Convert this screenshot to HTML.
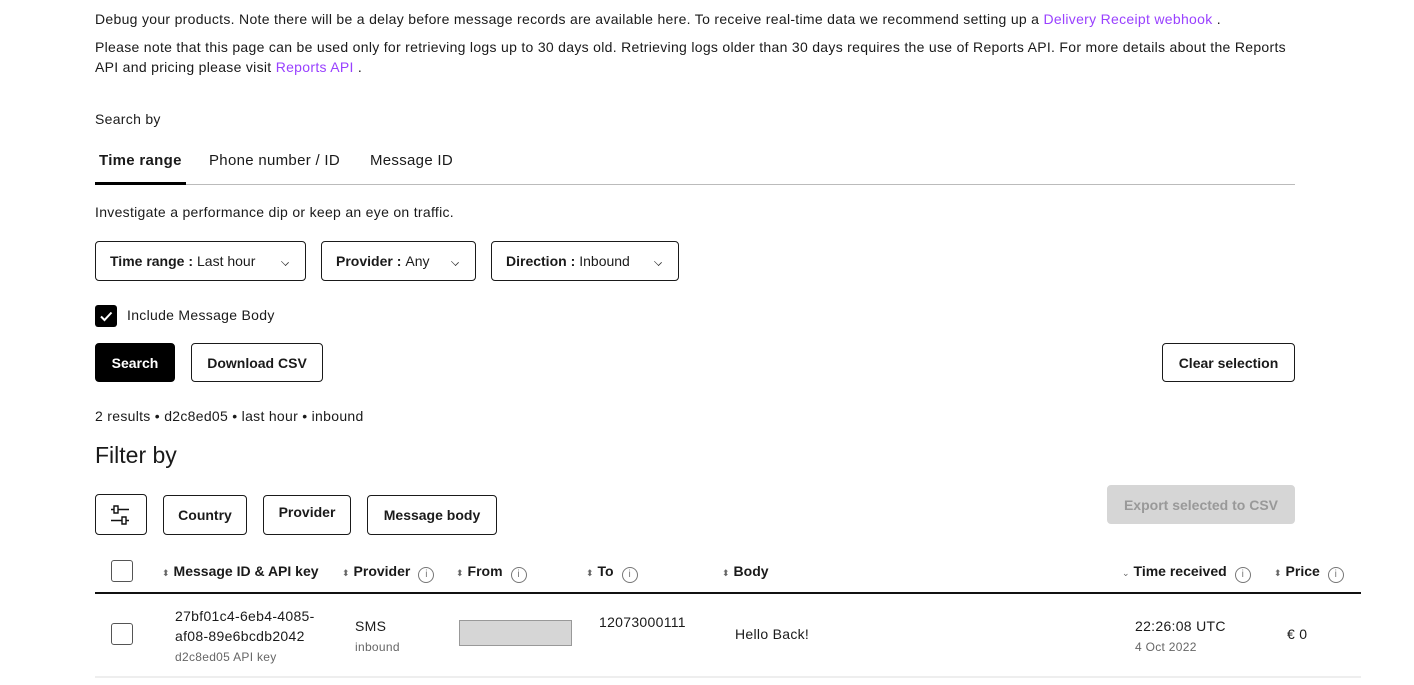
<!DOCTYPE html>
<html><head><meta charset="utf-8"><style>
*{box-sizing:border-box;margin:0;padding:0}
body{width:1414px;height:685px;overflow:hidden;background:#fff;font-family:"Liberation Sans",sans-serif;font-size:14px;color:#1a1a1a;position:relative;letter-spacing:0.3px}
.a{position:absolute;white-space:nowrap}
.p{color:#9941ff}
.box{position:absolute;border:1px solid #1a1a1a;border-radius:4px;background:#fff;display:flex;align-items:center;justify-content:center;font-weight:bold;font-size:14px;letter-spacing:0}
.dd{justify-content:flex-start;padding-left:14px;font-weight:normal}
.dd b{margin-right:4px}
.chev{position:absolute;right:16px;top:16px;width:8px;height:8px;border-right:1.3px solid #333;border-bottom:1.3px solid #333;transform:rotate(45deg) scale(.8,.6)}
.cb{position:absolute;width:22px;height:22px;border:1.5px solid #555;border-radius:3px}
.th{position:absolute;top:563px;font-weight:bold;font-size:14px;white-space:nowrap;letter-spacing:0}
.s{font-size:9px;color:#666;margin-right:4px;font-weight:normal}
.i{display:inline-block;width:16px;height:16px;border:1px solid #777;border-radius:50%;vertical-align:-1px;margin-left:8px;text-align:center;font-size:10px;line-height:14px;color:#777;font-weight:normal}
.sub{font-size:12px;color:#666}
</style></head><body>
<div class="a" style="left:95px;top:11px">Debug your products. Note there will be a delay before message records are available here. To receive real-time data we recommend setting up a <span class="p">Delivery Receipt webhook</span> .</div>
<div class="a" style="left:95px;top:39px">Please note that this page can be used only for retrieving logs up to 30 days old. Retrieving logs older than 30 days requires the use of Reports API. For more details about the Reports</div>
<div class="a" style="left:95px;top:59px">API and pricing please visit <span class="p">Reports API</span> .</div>
<div class="a" style="left:95px;top:111px">Search by</div>
<div class="a" style="left:99px;top:152px;font-size:15px;font-weight:bold">Time range</div>
<div class="a" style="left:209px;top:152px;font-size:15px">Phone number / ID</div>
<div class="a" style="left:370px;top:152px;font-size:15px">Message ID</div>
<div class="a" style="left:95px;top:184px;width:1200px;height:1px;background:#bbb"></div>
<div class="a" style="left:95px;top:182px;width:91px;height:3px;background:#000"></div>
<div class="a" style="left:95px;top:204px">Investigate a performance dip or keep an eye on traffic.</div>
<div class="box dd" style="left:95px;top:241px;width:211px;height:40px"><b>Time range :</b>Last hour<span class="chev"></span></div>
<div class="box dd" style="left:321px;top:241px;width:155px;height:40px"><b>Provider :</b>Any<span class="chev"></span></div>
<div class="box dd" style="left:491px;top:241px;width:188px;height:40px"><b>Direction :</b>Inbound<span class="chev"></span></div>
<div class="a" style="left:95px;top:305px;width:22px;height:22px;background:#000;border-radius:3px"><svg width="22" height="22"><path d="M6 11.5l3.5 3.5L16.5 7.5" stroke="#fff" stroke-width="2" fill="none"/></svg></div>
<div class="a" style="left:127px;top:307px">Include Message Body</div>
<div class="box" style="left:95px;top:343px;width:80px;height:39px;background:#000;color:#fff;border-color:#000">Search</div>
<div class="box" style="left:191px;top:343px;width:132px;height:39px">Download CSV</div>
<div class="box" style="left:1162px;top:343px;width:133px;height:39px">Clear selection</div>
<div class="a" style="left:95px;top:408px">2 results • d2c8ed05 • last hour • inbound</div>
<div class="a" style="left:95px;top:442px;font-size:23px;letter-spacing:0">Filter by</div>
<div class="box" style="left:95px;top:494px;width:52px;height:41px"><svg width="26" height="26" viewBox="0 0 26 26" fill="none" stroke="#111" stroke-width="1.4"><path d="M3 7.5h3M10 7.5h11M6 4h4v7H6zM3 18.5h11M18 18.5h3M14 15h4v7h-4z"/></svg></div>
<div class="box" style="left:163px;top:495px;width:84px;height:40px">Country</div>
<div class="box" style="left:263px;top:495px;width:88px;height:40px;padding-bottom:6px">Provider</div>
<div class="box" style="left:367px;top:495px;width:130px;height:40px">Message body</div>
<div class="box" style="left:1107px;top:485px;width:188px;height:39px;background:#d6d6d6;border-color:#d6d6d6;color:#999">Export selected to CSV</div>
<div class="cb" style="left:111px;top:560px"></div>
<div class="th" style="left:162px"><span class="s">⬍</span>Message ID &amp; API key</div>
<div class="th" style="left:342px"><span class="s">⬍</span>Provider<span class="i">i</span></div>
<div class="th" style="left:456px"><span class="s">⬍</span>From<span class="i">i</span></div>
<div class="th" style="left:586px"><span class="s">⬍</span>To<span class="i">i</span></div>
<div class="th" style="left:722px"><span class="s">⬍</span>Body</div>
<div class="th" style="left:1122px"><span class="s">⌄</span>Time received<span class="i">i</span></div>
<div class="th" style="left:1274px"><span class="s">⬍</span>Price<span class="i">i</span></div>
<div class="a" style="left:95px;top:592px;width:1266px;height:1.5px;background:#111"></div>
<div class="cb" style="left:111px;top:623px"></div>
<div class="a" style="left:175px;top:606px;line-height:20px">27bf01c4-6eb4-4085-<br>af08-89e6bcdb2042<br><span class="sub">d2c8ed05 API key</span></div>
<div class="a" style="left:355px;top:616px;line-height:20px">SMS<br><span class="sub">inbound</span></div>
<div class="a" style="left:459px;top:620px;width:113px;height:26px;background:#d6d6d6;border:1px solid #999"></div>
<div class="a" style="left:599px;top:614px">12073000111</div>
<div class="a" style="left:735px;top:626px">Hello Back!</div>
<div class="a" style="left:1135px;top:616px;line-height:20px">22:26:08 UTC<br><span class="sub">4 Oct 2022</span></div>
<div class="a" style="left:1287px;top:626px">€ 0</div>
<div class="a" style="left:95px;top:676px;width:1266px;height:2px;background:#eee"></div>
</body></html>
